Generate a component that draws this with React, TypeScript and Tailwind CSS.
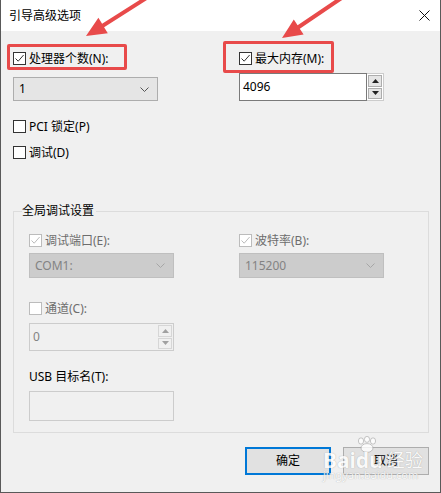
import React from "react";

const RED = "#e84a4a";

function CheckMark({ color }: { color: string }) {
  return (
    <svg width="11" height="11" viewBox="0 0 11 11">
      <path d="M1.5 5.5 L4.2 8.2 L9.6 2" fill="none" stroke={color} strokeWidth="1" />
    </svg>
  );
}

function CheckBox({ label, checked, disabled }: { label: string; checked?: boolean; disabled?: boolean }) {
  return (
    <div className="flex h-[13px] items-center gap-[3px]">
      <span
        className={`flex h-[13px] w-[13px] shrink-0 items-center justify-center border bg-white ${
          disabled ? "border-[#bcbcbc]" : "border-[#333333]"
        }`}
      >
        {checked && <CheckMark color={disabled ? "#bcbcbc" : "#333333"} />}
      </span>
      <span className={`whitespace-nowrap text-[12px] leading-[16px] ${disabled ? "text-[#6d6d6d]" : "text-black"}`}>
        {label}
      </span>
    </div>
  );
}

function Chevron({ color }: { color: string }) {
  return (
    <svg width="9" height="5" viewBox="0 0 9 5">
      <path d="M0.5 0.5 L4.5 4.5 L8.5 0.5" fill="none" stroke={color} strokeWidth="1" />
    </svg>
  );
}

function Combo({ value, disabled }: { value: string; disabled?: boolean }) {
  return (
    <div
      className={`flex w-[145px] items-center justify-between border pl-[5px] pr-[8px] ${
        disabled ? "h-[25px] border-[#bfbfbf] bg-[#cccccc] text-[#838383]" : "h-[24px] border-[#adadad] bg-[#e5e5e5] text-black"
      }`}
    >
      <span className="text-[12px] leading-[16px]">{value}</span>
      <Chevron color={disabled ? "#a6a6a6" : "#555555"} />
    </div>
  );
}

function Tri({ up, color }: { up?: boolean; color: string }) {
  return (
    <svg width="7" height="4" viewBox="0 0 7 4">
      <path d={up ? "M0 4 L3.5 0 L7 4 Z" : "M0 0 L3.5 4 L7 0 Z"} fill={color} />
    </svg>
  );
}

function Spin({ value, disabled }: { value: string; disabled?: boolean }) {
  return (
    <div className="flex h-[28px] w-[145px]">
      <div
        className={`flex flex-1 items-center border pl-[3px] text-[12px] leading-[16px] ${
          disabled ? "border-[#cccccc] border-r-0 bg-[#f0f0f0] text-[#838383]" : "border-[#7a7a7a] bg-white text-black"
        }`}
      >
        {value}
      </div>
      <div
        className={`flex w-[17px] flex-col gap-[1px] border border-l-0 p-[1px] ${
          disabled ? "border-[#cccccc] bg-[#f0f0f0]" : "border-[#cccccc] bg-white"
        }`}
      >
        <div
          className={`flex flex-1 items-center justify-center border ${
            disabled ? "border-[#d6d6d6] bg-[#f0f0f0]" : "border-[#adadad] bg-[#e5e5e5]"
          }`}
        >
          <Tri up color={disabled ? "#a0a0a0" : "#222222"} />
        </div>
        <div
          className={`flex flex-1 items-center justify-center border ${
            disabled ? "border-[#d6d6d6] bg-[#f0f0f0]" : "border-[#adadad] bg-[#e5e5e5]"
          }`}
        >
          <Tri color={disabled ? "#a0a0a0" : "#222222"} />
        </div>
      </div>
    </div>
  );
}

export default function App() {
  return (
    <div className="relative flex h-[493px] w-[441px] flex-col overflow-hidden border-x border-b border-[#595959] bg-[#f0f0f0] font-['Noto_Sans','Noto_Sans_CJK_SC',sans-serif] text-black">
      {/* title bar */}
      <div className="flex h-[31px] shrink-0 items-center justify-between bg-white pl-[8px] pr-[10px]">
        <span className="text-[12px] leading-[16px]">引导高级选项</span>
        <svg width="11" height="11" viewBox="0 0 11 11">
          <path d="M0.5 0.5 L10.5 10.5 M10.5 0.5 L0.5 10.5" stroke="#111111" strokeWidth="1" />
        </svg>
      </div>

      <div className="flex flex-col pl-[12px] pt-[21px]">
        <div className="grid grid-cols-[226px_1fr]">
          <div className="flex flex-col">
            <CheckBox label="处理器个数(N):" checked />
            <div className="mt-[12px]">
              <Combo value="1" />
            </div>
          </div>
          <div className="flex flex-col">
            <CheckBox label="最大内存(M):" checked />
            <div className="mt-[8px] w-[145px]">
              <Spin value="4096" />
            </div>
          </div>
        </div>

        <div className="mt-[19px]">
          <CheckBox label="PCI 锁定(P)" />
        </div>
        <div className="mt-[13px]">
          <CheckBox label="调试(D)" />
        </div>

        {/* group box */}
        <div className="relative mt-[52px] h-[222px] w-[416px] border border-[#dcdcdc] pl-[15px] pt-[22px]">
          <span className="absolute left-[8px] top-[-9px] bg-[#f0f0f0] pr-[2px] text-[12px] leading-[16px]">
            全局调试设置
          </span>
          <div className="grid grid-cols-[210px_1fr]">
            <div className="flex flex-col">
              <CheckBox label="调试端口(E):" checked disabled />
              <div className="mt-[6px]">
                <Combo value="COM1:" disabled />
              </div>
            </div>
            <div className="flex flex-col">
              <CheckBox label="波特率(B):" checked disabled />
              <div className="mt-[6px]">
                <Combo value="115200" disabled />
              </div>
            </div>
          </div>
          <div className="mt-[24px]">
            <CheckBox label="通道(C):" disabled />
          </div>
          <div className="mt-[8px]">
            <Spin value="0" disabled />
          </div>
          <div className="mt-[18px] text-[12px] leading-[16px]">USB 目标名(T):</div>
          <div className="mt-[6px] h-[30px] w-[145px] border border-[#cccccc] bg-[#f0f0f0]" />
        </div>

        <div className="mt-[14px] flex w-[416px] justify-end gap-[12px]">
          <button className="flex h-[28px] w-[86px] items-center justify-center border-2 border-[#0078d7] bg-[#e1e1e1] text-[12px] leading-[16px]">
            确定
          </button>
          <button className="flex h-[28px] w-[86px] items-center justify-center border border-[#adadad] bg-[#e1e1e1] text-[12px] leading-[16px]">
            取消
          </button>
        </div>
      </div>

      {/* annotation boxes */}
      <div className="pointer-events-none absolute left-[6px] top-[44px] h-[26px] w-[120px] rounded-[2px] border-[3px] border-[#e84a4a]" />
      <div className="pointer-events-none absolute left-[222px] top-[41px] h-[32px] w-[111px] rounded-[2px] border-[3px] border-[#e84a4a]" />

      {/* annotation arrows */}
      <svg className="pointer-events-none absolute left-[-1px] top-0" width="441" height="493" viewBox="0 0 441 493">
        <polygon
          points="149,-1.3 104.1,27.2 107.8,33.2 86,36 98.4,17.8 102.1,23.8 147,-4.7"
          fill={RED}
        />
        <polygon
          points="344.1,-1.3 299.8,28.7 303.6,34.5 282,38 293.8,19.5 297.6,25.3 341.9,-4.7"
          fill={RED}
        />
      </svg>

      {/* watermark */}
      <div className="pointer-events-none absolute left-[322px] top-[436px] flex flex-col items-start opacity-80">
        <svg className="ml-[32px]" width="24" height="17" viewBox="0 0 24 17">
          <g fill="#ffffff" stroke="#a8a8a8" strokeWidth="0.8">
            <ellipse cx="6" cy="5" rx="2.6" ry="3.2" />
            <ellipse cx="12" cy="3.4" rx="2.6" ry="3" />
            <ellipse cx="18" cy="5" rx="2.6" ry="3.2" />
            <ellipse cx="12" cy="12" rx="6" ry="4.4" />
          </g>
        </svg>
        <div className="-mt-[4px] flex items-end whitespace-nowrap">
          <span className="text-[21px] font-bold leading-[22px] text-white [text-shadow:0_0_1px_#8f8f8f]">Bai</span>
          <span className="text-[21px] font-bold leading-[22px] text-white [text-shadow:0_0_1px_#8f8f8f]">du</span>
          <span className="ml-[4px] text-[18px] leading-[22px] text-white [text-shadow:0_0_1px_#8f8f8f]">经验</span>
        </div>
        <span className="-mt-[2px] text-[11px] leading-[12px] text-white [text-shadow:0_0_1px_#8f8f8f]">
          jingyan.baidu.com
        </span>
      </div>
    </div>
  );
}
